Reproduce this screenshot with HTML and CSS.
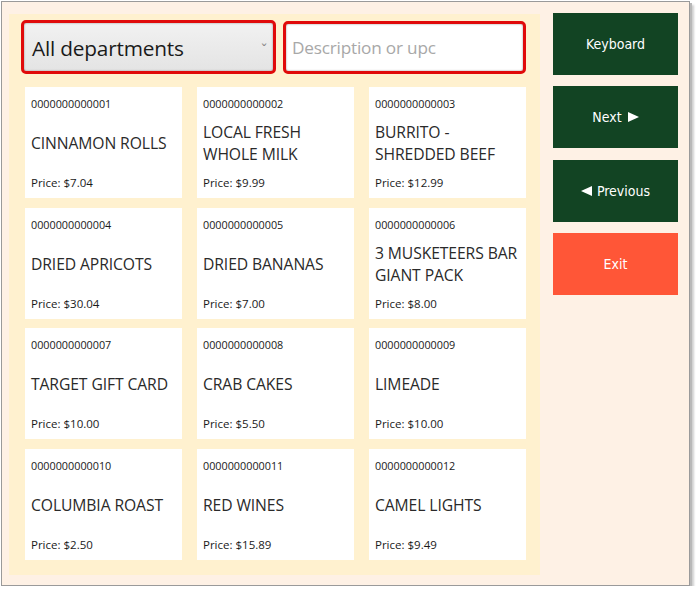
FILE: index.html
```html
<!DOCTYPE html>
<html>
<head>
<meta charset="utf-8">
<link rel="stylesheet" href="styles.css">
</head>
<body>
<div class="window">
  <div class="panel">
    <div class="toolbar">
      <div class="select"><span class="select-text">All departments</span><span class="chev">&#711;</span></div>
      <div class="search"><span class="placeholder">Description or upc</span></div>
    </div>
    <div class="grid">
      <div class="card"><div class="upc">0000000000001</div><div class="name">CINNAMON ROLLS</div><div class="price">Price: $7.04</div></div>
      <div class="card"><div class="upc">0000000000002</div><div class="name">LOCAL FRESH WHOLE MILK</div><div class="price">Price: $9.99</div></div>
      <div class="card"><div class="upc">0000000000003</div><div class="name">BURRITO - SHREDDED BEEF</div><div class="price">Price: $12.99</div></div>
      <div class="card"><div class="upc">0000000000004</div><div class="name">DRIED APRICOTS</div><div class="price">Price: $30.04</div></div>
      <div class="card"><div class="upc">0000000000005</div><div class="name">DRIED BANANAS</div><div class="price">Price: $7.00</div></div>
      <div class="card"><div class="upc">0000000000006</div><div class="name">3 MUSKETEERS BAR GIANT PACK</div><div class="price">Price: $8.00</div></div>
      <div class="card"><div class="upc">0000000000007</div><div class="name">TARGET GIFT CARD</div><div class="price">Price: $10.00</div></div>
      <div class="card"><div class="upc">0000000000008</div><div class="name">CRAB CAKES</div><div class="price">Price: $5.50</div></div>
      <div class="card"><div class="upc">0000000000009</div><div class="name">LIMEADE</div><div class="price">Price: $10.00</div></div>
      <div class="card"><div class="upc">0000000000010</div><div class="name">COLUMBIA ROAST</div><div class="price">Price: $2.50</div></div>
      <div class="card"><div class="upc">0000000000011</div><div class="name">RED WINES</div><div class="price">Price: $15.89</div></div>
      <div class="card"><div class="upc">0000000000012</div><div class="name">CAMEL LIGHTS</div><div class="price">Price: $9.49</div></div>
    </div>
  </div>
  <div class="actions">
    <div class="btn green">Keyboard</div>
    <div class="btn green">Next<svg class="arrow right" width="11" height="10" viewBox="0 0 11 10"><polygon points="0,0 11,5 0,10" fill="#fff"/></svg></div>
    <div class="btn green"><svg class="arrow left" width="11" height="10" viewBox="0 0 11 10"><polygon points="11,0 0,5 11,10" fill="#fff"/></svg>Previous</div>
    <div class="btn exit">Exit</div>
  </div>
</div>
</body>
</html>
```

FILE: styles.css
```css
html, body {
  margin: 0;
  padding: 0;
  background: #ffffff;
}
body {
  padding: 1px 0 0 1px;
  font-family: "Open Sans", "Noto Sans", sans-serif;
  color: #222;
}
.window {
  box-sizing: border-box;
  width: 689px;
  height: 585px;
  border: 1px solid #9a9a9a;
  box-shadow: 2px 2px 0 #b8b8b8, 4px 4px 2px #cfcfcf;
  background: #fef1e5;
  display: flex;
  padding: 11px 10px 0 7px;
  gap: 13px;
}
.panel {
  width: 531px;
  height: 561px;
  background: #fff1cf;
  box-sizing: border-box;
  padding: 6px 14px 0 12px;
  margin-top: 1px;
  display: flex;
  flex-direction: column;
}
.toolbar {
  display: flex;
  gap: 7px;
  height: 54px;
}
.select {
  box-sizing: border-box;
  width: 255px;
  height: 54px;
  border: 3px solid #e00a0a;
  border-radius: 5px;
  background: linear-gradient(#f1f1f1, #e4e4e4);
  box-shadow: inset 0 0 2px #888;
  display: flex;
  align-items: center;
  justify-content: space-between;
  padding: 2px 6px 0 8px;
}
.select-text {
  font-family: "Open Sans", sans-serif;
  font-size: 20.8px;
  color: #1a1a1a;
  letter-spacing: -0.2px;
}
.chev {
  font-size: 14px;
  color: #888;
  margin-top: 2px;
}
.search {
  box-sizing: border-box;
  width: 243px;
  height: 53px;
  border: 3px solid #e00a0a;
  border-radius: 5px;
  background: #fff;
  box-shadow: inset 0 0 2px #888;
  display: flex;
  align-items: center;
  padding-left: 6px;
  margin-top: 1px;
}
.placeholder {
  font-size: 17.2px;
  color: #a8a8a8;
  letter-spacing: -0.2px;
}
.grid {
  margin-top: 13px;
  padding-left: 4px;
  display: grid;
  grid-template-columns: repeat(3, 1fr);
  grid-auto-rows: 111px;
  column-gap: 15px;
  row-gap: 9.7px;
}
.card {
  background: #ffffff;
  display: flex;
  flex-direction: column;
  padding: 9px 6px 7px 6px;
}
.upc {
  font-size: 10.8px;
  line-height: 15px;
  color: #1a1a1a;
}
.name {
  flex: 1;
  display: flex;
  align-items: center;
  font-size: 15.7px;
  line-height: 22px;
  color: #2a2a2a;
  letter-spacing: -0.1px;
}
.price {
  font-size: 11.5px;
  line-height: 16px;
  color: #1a1a1a;
}
.actions {
  width: 125px;
  display: flex;
  flex-direction: column;
  gap: 11.3px;
}
.btn {
  height: 62px;
  display: flex;
  align-items: center;
  justify-content: center;
  color: #fff;
  font-family: "DejaVu Sans Condensed", "DejaVu Sans", sans-serif;
  font-stretch: condensed;
  font-size: 14px;
}
.arrow.right {
  margin-left: 6px;
}
.arrow.left {
  margin-right: 5px;
}
.green {
  background: #124423;
}
.exit {
  background: #ff5637;
}
```
